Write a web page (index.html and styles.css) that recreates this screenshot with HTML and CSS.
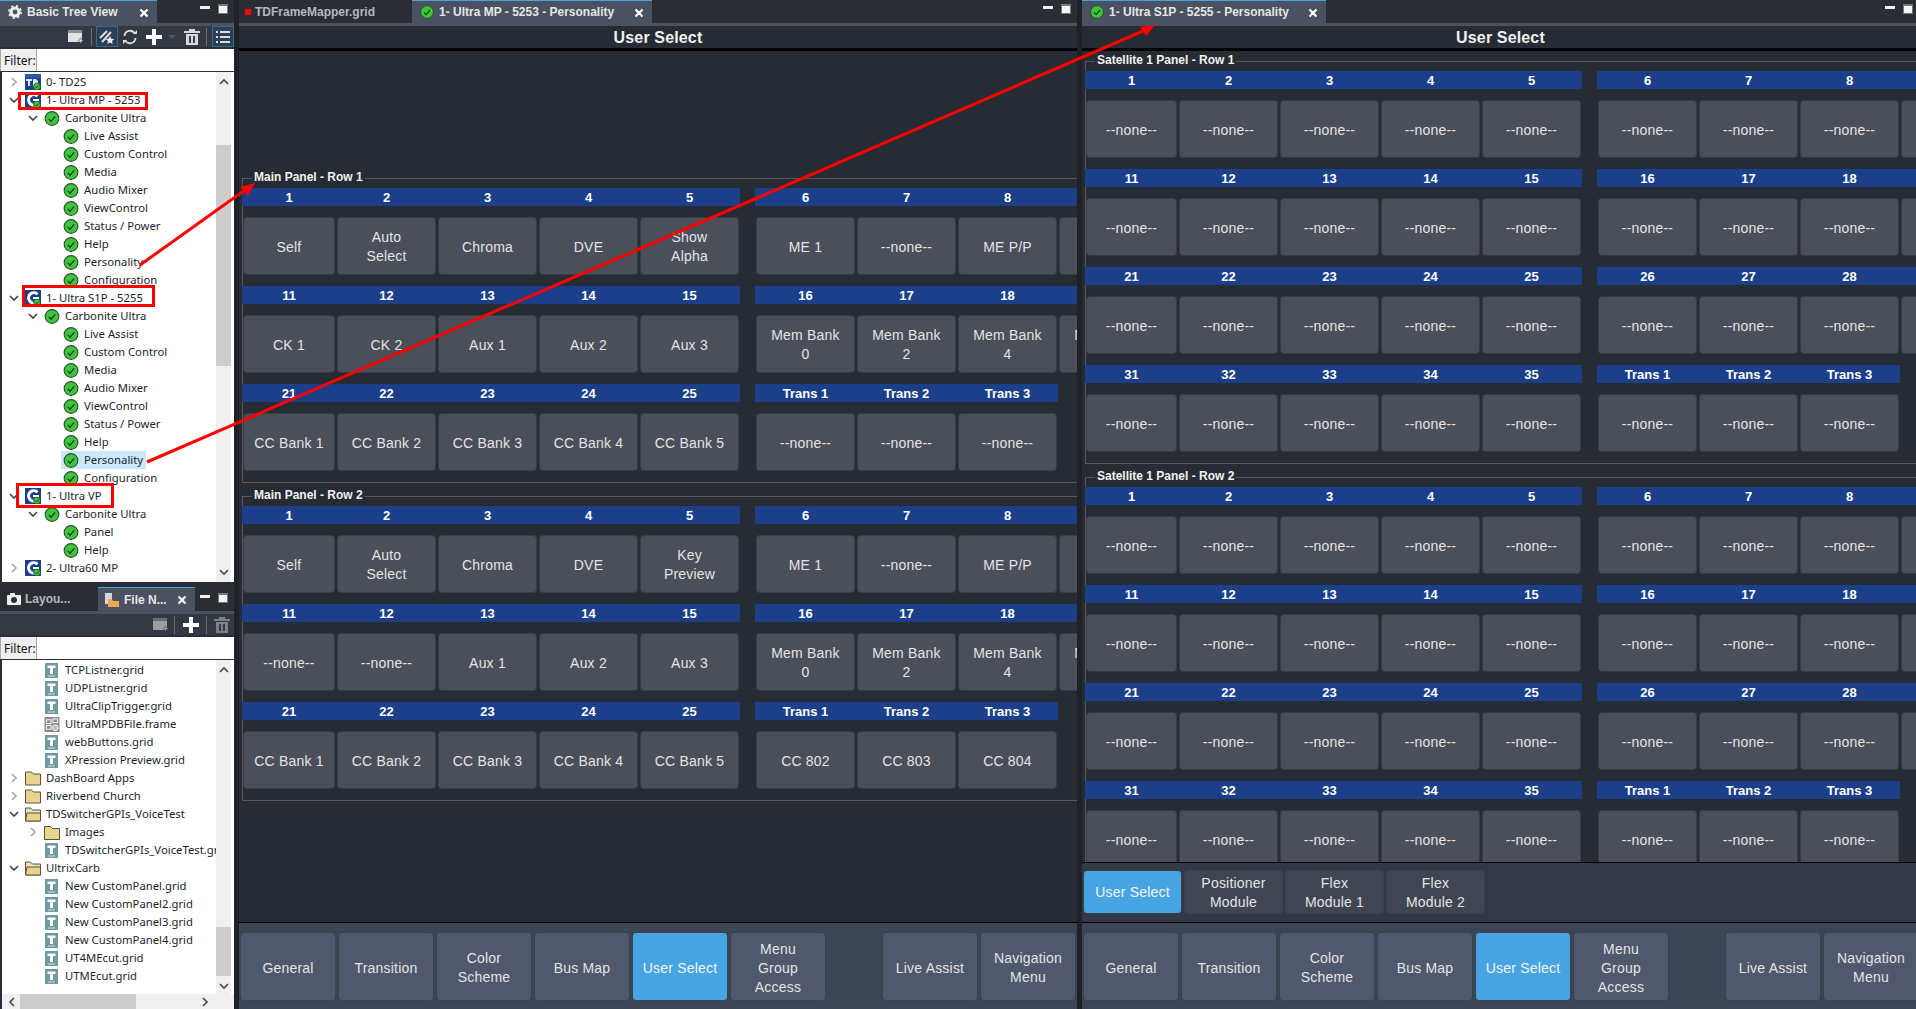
FILE: index.html
```html
<!DOCTYPE html>
<html lang="en">
<head>
<meta charset="utf-8">
<title>DashBoard</title>
<link rel="stylesheet" href="styles.css">
</head>
<body>
<svg class="defs" width="0" height="0" aria-hidden="true">
  <symbol id="ok" viewBox="0 0 14 14"><circle cx="7" cy="7" r="6.4" fill="#3cc63c" stroke="#2c4a30"/><path d="M4 7.4l2.1 2.2L10 5" fill="none" stroke="#1d3a20" stroke-width="1.2"/></symbol>
  <symbol id="logo" viewBox="0 0 16 16"><rect width="16" height="16" fill="#1c3f8a"/><path d="M12.5 4.2A5.2 5.2 0 1 0 11 12.6" fill="none" stroke="#fff" stroke-width="3"/><rect x="8" y="7" width="6" height="2" fill="#fff"/><circle cx="12" cy="12.5" r="3.4" fill="#3cc63c" stroke="#2c4a30" stroke-width=".7"/><path d="M10.4 12.6l1.2 1.2 2-2.2" fill="none" stroke="#1d3a20"/></symbol>
  <symbol id="tdlogo" viewBox="0 0 16 16"><rect width="16" height="16" fill="#1c3f8a"/><rect y="0" width="16" height="4" fill="#2a5aa8"/><path d="M1 5h6v2H5v5H3V7H1zM8 5h3l2 2v3l-2 2H8z" fill="#dfe6f2"/><circle cx="12" cy="12.5" r="3.4" fill="#3cc63c" stroke="#2c4a30" stroke-width=".7"/><path d="M10.4 12.6l1.2 1.2 2-2.2" fill="none" stroke="#1d3a20"/></symbol>
  <symbol id="file" viewBox="0 0 14 15"><rect width="13" height="15" fill="#6f9a9f"/><path d="M2.5 2.5h8V5H8v6H5V5H2.5z" fill="#fff"/><rect x="3" y="12.5" width="7" height="1" fill="#cfe0e2"/></symbol>
  <symbol id="frame" viewBox="0 0 16 16"><rect width="16" height="16" fill="#8b8b8b"/><rect x="2" y="3" width="5" height="4" fill="none" stroke="#fff"/><rect x="2" y="9" width="5" height="4" fill="none" stroke="#fff"/><rect x="9" y="2" width="5" height="4" fill="none" stroke="#fff"/><circle cx="11.5" cy="11.5" r="3" fill="#bbb" stroke="#fff"/></symbol>
  <symbol id="fold" viewBox="0 0 16 15"><path d="M.5 14.5V1.5h6l2 2h7v11z" fill="#e8d48f" stroke="#5a5240"/></symbol>
  <symbol id="fopen" viewBox="0 0 16 15"><path d="M.5 14.5V1.5h5l2 2h8v11z" fill="#f0e3b5" stroke="#5a5240"/><path d="M.5 14.5l1.5-8h13.5v8z" fill="#e8d48f" stroke="#5a5240"/></symbol>
  <symbol id="gt" viewBox="0 0 10 10"><path d="M3 1l4 4-4 4" fill="none" stroke="#a5a5a5" stroke-width="1.6"/></symbol>
  <symbol id="gtd" viewBox="0 0 10 10"><path d="M3 1l4 4-4 4" fill="none" stroke="#444" stroke-width="1.6"/></symbol>
  <symbol id="dn" viewBox="0 0 10 10"><path d="M1 3l4 4 4-4" fill="none" stroke="#444" stroke-width="1.6"/></symbol>
  <symbol id="x" viewBox="0 0 10 10"><path d="M1.5 1.5l7 7M8.5 1.5l-7 7" fill="none" stroke="#fff" stroke-width="2.2"/></symbol>
  <symbol id="plus" viewBox="0 0 16 16"><path d="M6 0h4v6h6v4h-6v6H6v-6H0V6h6z" fill="#fff"/></symbol>
  <symbol id="trash" viewBox="0 0 16 16"><path d="M0 2h16v2H0zM5 0h6v2H5zM2 5h12v11H2z" fill="#d8d8d8"/><path d="M6 7v7M10 7v7" stroke="#3a3f48" stroke-width="2"/></symbol>
  <symbol id="newwin" viewBox="0 0 16 16"><path d="M1 1h14v12H1z" fill="#e2e2e2"/><rect x="1" y="1" width="14" height="3" fill="#8a8f98"/><path d="M11 11h2V9h1v2h2v1h-2v2h-1v-2h-2z" fill="#fff" stroke="#333943" stroke-width=".4"/></symbol>
</svg>

<aside class="side">
  <section class="dock top">
    <div class="strip">
      <div class="tab on wide"><svg class="i14" viewBox="0 0 14 14"><circle cx="7" cy="7" r="4" fill="none" stroke="#eee" stroke-width="3.2"/><circle cx="7" cy="7" r="6.2" fill="none" stroke="#eee" stroke-width="1.6" stroke-dasharray="2.2 2.7"/></svg><span class="tabtxt">Basic Tree View</span><svg class="xic"><use href="#x"/></svg></div>
      <div class="winctl"><i class="min"></i><i class="max"></i></div>
    </div>
    <div class="tools">
      <svg class="ti g1"><use href="#newwin"/></svg>
      <i class="sep s1"></i>
      <div class="sel"><svg class="ti" viewBox="0 0 16 16"><path d="M1 9L8 2M3 13L12 3" stroke="#ddd" stroke-width="2" fill="none"/><path d="M11 7l1.300 2.800 3 .3-2.300 2 .7 3-2.700-1.600-2.700 1.600.7-3-2.300-2 3-.3z" fill="#eee"/></svg></div>
      <svg class="ti g2" viewBox="0 0 16 16"><path d="M2.500 7A5.500 5.500 0 0 1 13 5M13.500 9A5.500 5.500 0 0 1 3 11" fill="none" stroke="#ddd" stroke-width="1.800"/><path d="M11 5h4V1zM5 11H1v4z" fill="#ddd"/></svg>
      <svg class="ti g3"><use href="#plus"/></svg>
      <i class="caret"></i>
      <svg class="ti g4"><use href="#trash"/></svg>
      <i class="sep s2"></i>
      <div class="sel last"><svg class="ti" viewBox="0 0 16 16"><path d="M1 2h2v2H1zM5 2h10v2H5zM1 7h2v2H1zM5 7h10v2H5zM1 12h2v2H1zM5 12h10v2H5z" fill="#ddd"/></svg></div>
    </div>
    <div class="filter"><label class="flabel">Filter:</label><div class="finput"></div></div>
    <div class="treewrap">
      <div class="tree">
        <div class="r l0"><svg class="ch"><use href="#gt"/></svg><svg class="ic"><use href="#tdlogo"/></svg><span>0- TD2S</span></div>
        <div class="r l0"><svg class="ch"><use href="#dn"/></svg><svg class="ic"><use href="#logo"/></svg><span>1- Ultra MP - 5253</span></div>
        <div class="r l1"><svg class="ch"><use href="#dn"/></svg><svg class="ic"><use href="#ok"/></svg><span>Carbonite Ultra</span></div>
        <div class="r l2"><svg class="ic"><use href="#ok"/></svg><span>Live Assist</span></div>
        <div class="r l2"><svg class="ic"><use href="#ok"/></svg><span>Custom Control</span></div>
        <div class="r l2"><svg class="ic"><use href="#ok"/></svg><span>Media</span></div>
        <div class="r l2"><svg class="ic"><use href="#ok"/></svg><span>Audio Mixer</span></div>
        <div class="r l2"><svg class="ic"><use href="#ok"/></svg><span>ViewControl</span></div>
        <div class="r l2"><svg class="ic"><use href="#ok"/></svg><span>Status / Power</span></div>
        <div class="r l2"><svg class="ic"><use href="#ok"/></svg><span>Help</span></div>
        <div class="r l2"><svg class="ic"><use href="#ok"/></svg><span>Personality</span></div>
        <div class="r l2"><svg class="ic"><use href="#ok"/></svg><span>Configuration</span></div>
        <div class="r l0"><svg class="ch"><use href="#dn"/></svg><svg class="ic"><use href="#logo"/></svg><span>1- Ultra S1P - 5255</span></div>
        <div class="r l1"><svg class="ch"><use href="#dn"/></svg><svg class="ic"><use href="#ok"/></svg><span>Carbonite Ultra</span></div>
        <div class="r l2"><svg class="ic"><use href="#ok"/></svg><span>Live Assist</span></div>
        <div class="r l2"><svg class="ic"><use href="#ok"/></svg><span>Custom Control</span></div>
        <div class="r l2"><svg class="ic"><use href="#ok"/></svg><span>Media</span></div>
        <div class="r l2"><svg class="ic"><use href="#ok"/></svg><span>Audio Mixer</span></div>
        <div class="r l2"><svg class="ic"><use href="#ok"/></svg><span>ViewControl</span></div>
        <div class="r l2"><svg class="ic"><use href="#ok"/></svg><span>Status / Power</span></div>
        <div class="r l2"><svg class="ic"><use href="#ok"/></svg><span>Help</span></div>
        <div class="r l2 hl"><svg class="ic"><use href="#ok"/></svg><span>Personality</span></div>
        <div class="r l2"><svg class="ic"><use href="#ok"/></svg><span>Configuration</span></div>
        <div class="r l0"><svg class="ch"><use href="#dn"/></svg><svg class="ic"><use href="#logo"/></svg><span>1- Ultra VP</span></div>
        <div class="r l1"><svg class="ch"><use href="#dn"/></svg><svg class="ic"><use href="#ok"/></svg><span>Carbonite Ultra</span></div>
        <div class="r l2"><svg class="ic"><use href="#ok"/></svg><span>Panel</span></div>
        <div class="r l2"><svg class="ic"><use href="#ok"/></svg><span>Help</span></div>
        <div class="r l0"><svg class="ch"><use href="#gt"/></svg><svg class="ic"><use href="#logo"/></svg><span>2- Ultra60 MP</span></div>
      </div>
      <div class="vbar"><svg class="arr"><use href="#dn" class="up"/></svg><div class="thumb t1"></div><svg class="arr"><use href="#dn"/></svg></div>
    </div>
  </section>

  <section class="dock bottom">
    <div class="strip s2tall">
      <div class="tab off"><svg class="i14" viewBox="0 0 14 14"><rect x="0" y="3" width="14" height="10" rx="1" fill="#eee"/><rect x="3" y="1" width="5" height="3" fill="#eee"/><circle cx="7" cy="8" r="3" fill="#2b2f35"/></svg><span class="tabtxt dim">Layou...</span></div>
      <div class="tab on small"><svg class="i14" viewBox="0 0 14 14"><rect x="0" y="0" width="7" height="11" fill="#cfd6e0"/><path d="M3 6h4l1 2h6v6H3z" fill="#f0a84a"/></svg><span class="tabtxt">File N...</span><svg class="xic"><use href="#x"/></svg></div>
      <div class="winctl"><i class="min"></i><i class="max"></i></div>
    </div>
    <div class="tools lowbar">
      <svg class="ti g5"><use href="#newwin"/></svg>
      <i class="sep s3"></i>
      <svg class="ti g6"><use href="#plus"/></svg>
      <i class="sep s4"></i>
      <svg class="ti g7"><use href="#trash"/></svg>
    </div>
    <div class="filter"><label class="flabel">Filter:</label><div class="finput"></div></div>
    <div class="treewrap">
      <div class="tree">
        <div class="r l1"><svg class="ch none"></svg><svg class="ic"><use href="#file"/></svg><span>TCPListner.grid</span></div>
        <div class="r l1"><svg class="ch none"></svg><svg class="ic"><use href="#file"/></svg><span>UDPListner.grid</span></div>
        <div class="r l1"><svg class="ch none"></svg><svg class="ic"><use href="#file"/></svg><span>UltraClipTrigger.grid</span></div>
        <div class="r l1"><svg class="ch none"></svg><svg class="ic"><use href="#frame"/></svg><span>UltraMPDBFile.frame</span></div>
        <div class="r l1"><svg class="ch none"></svg><svg class="ic"><use href="#file"/></svg><span>webButtons.grid</span></div>
        <div class="r l1"><svg class="ch none"></svg><svg class="ic"><use href="#file"/></svg><span>XPression Preview.grid</span></div>
        <div class="r l0"><svg class="ch"><use href="#gt"/></svg><svg class="ic"><use href="#fold"/></svg><span>DashBoard Apps</span></div>
        <div class="r l0"><svg class="ch"><use href="#gt"/></svg><svg class="ic"><use href="#fold"/></svg><span>Riverbend Church</span></div>
        <div class="r l0"><svg class="ch"><use href="#dn"/></svg><svg class="ic"><use href="#fopen"/></svg><span>TDSwitcherGPIs_VoiceTest</span></div>
        <div class="r l1"><svg class="ch"><use href="#gt"/></svg><svg class="ic"><use href="#fold"/></svg><span>Images</span></div>
        <div class="r l1"><svg class="ch none"></svg><svg class="ic"><use href="#file"/></svg><span>TDSwitcherGPIs_VoiceTest.grid</span></div>
        <div class="r l0"><svg class="ch"><use href="#dn"/></svg><svg class="ic"><use href="#fopen"/></svg><span>UltrixCarb</span></div>
        <div class="r l1"><svg class="ch none"></svg><svg class="ic"><use href="#file"/></svg><span>New CustomPanel.grid</span></div>
        <div class="r l1"><svg class="ch none"></svg><svg class="ic"><use href="#file"/></svg><span>New CustomPanel2.grid</span></div>
        <div class="r l1"><svg class="ch none"></svg><svg class="ic"><use href="#file"/></svg><span>New CustomPanel3.grid</span></div>
        <div class="r l1"><svg class="ch none"></svg><svg class="ic"><use href="#file"/></svg><span>New CustomPanel4.grid</span></div>
        <div class="r l1"><svg class="ch none"></svg><svg class="ic"><use href="#file"/></svg><span>UT4MEcut.grid</span></div>
        <div class="r l1"><svg class="ch none"></svg><svg class="ic"><use href="#file"/></svg><span>UTMEcut.grid</span></div>
      </div>
      <div class="vbar"><svg class="arr"><use href="#dn" class="up"/></svg><div class="thumb t2"></div><svg class="arr"><use href="#dn"/></svg></div>
    </div>
    <div class="hbar"><svg class="arr"><use href="#gtd"/></svg><div class="hthumb"></div><svg class="arr"><use href="#gtd"/></svg></div>
  </section>
</aside>

<main class="pane first">
  <div class="strip">
    <div class="tab off mapper"><i class="redsq"></i><span class="tabtxt dim">TDFrameMapper.grid</span></div>
    <div class="tab on doc mp"><svg class="i14"><use href="#ok"/></svg><span class="tabtxt">1- Ultra MP - 5253 - Personality</span><svg class="xic"><use href="#x"/></svg></div>
    <div class="winctl"><i class="min"></i><i class="max"></i></div>
  </div>
  <h1 class="title">User Select</h1>
  <div class="content lower">
    <div class="group">
      <div class="glabel">Main Panel - Row 1</div>
      <div class="row">
        <div class="sec a"><div class="hd"><span>1</span><span>2</span><span>3</span><span>4</span><span>5</span></div><div class="bt"><div class="btn">Self</div><div class="btn">Auto<br>Select</div><div class="btn">Chroma</div><div class="btn">DVE</div><div class="btn">Show<br>Alpha</div></div></div>
        <div class="sec"><div class="hd"><span>6</span><span>7</span><span>8</span><span></span></div><div class="bt"><div class="btn">ME 1</div><div class="btn">--none--</div><div class="btn">ME P/P</div><div class="btn"></div></div></div>
      </div>
      <div class="row">
        <div class="sec a"><div class="hd"><span>11</span><span>12</span><span>13</span><span>14</span><span>15</span></div><div class="bt"><div class="btn">CK 1</div><div class="btn">CK 2</div><div class="btn">Aux 1</div><div class="btn">Aux 2</div><div class="btn">Aux 3</div></div></div>
        <div class="sec"><div class="hd"><span>16</span><span>17</span><span>18</span><span></span></div><div class="bt"><div class="btn">Mem Bank<br>0</div><div class="btn">Mem Bank<br>2</div><div class="btn">Mem Bank<br>4</div><div class="btn">Mem Bank<br>6</div></div></div>
      </div>
      <div class="row">
        <div class="sec a"><div class="hd"><span>21</span><span>22</span><span>23</span><span>24</span><span>25</span></div><div class="bt"><div class="btn">CC Bank 1</div><div class="btn">CC Bank 2</div><div class="btn">CC Bank 3</div><div class="btn">CC Bank 4</div><div class="btn">CC Bank 5</div></div></div>
        <div class="sec"><div class="hd"><span>Trans 1</span><span>Trans 2</span><span>Trans 3</span></div><div class="bt"><div class="btn">--none--</div><div class="btn">--none--</div><div class="btn">--none--</div></div></div>
      </div>
    </div>
    <div class="group">
      <div class="glabel">Main Panel - Row 2</div>
      <div class="row">
        <div class="sec a"><div class="hd"><span>1</span><span>2</span><span>3</span><span>4</span><span>5</span></div><div class="bt"><div class="btn">Self</div><div class="btn">Auto<br>Select</div><div class="btn">Chroma</div><div class="btn">DVE</div><div class="btn">Key<br>Preview</div></div></div>
        <div class="sec"><div class="hd"><span>6</span><span>7</span><span>8</span><span></span></div><div class="bt"><div class="btn">ME 1</div><div class="btn">--none--</div><div class="btn">ME P/P</div><div class="btn"></div></div></div>
      </div>
      <div class="row">
        <div class="sec a"><div class="hd"><span>11</span><span>12</span><span>13</span><span>14</span><span>15</span></div><div class="bt"><div class="btn">--none--</div><div class="btn">--none--</div><div class="btn">Aux 1</div><div class="btn">Aux 2</div><div class="btn">Aux 3</div></div></div>
        <div class="sec"><div class="hd"><span>16</span><span>17</span><span>18</span><span></span></div><div class="bt"><div class="btn">Mem Bank<br>0</div><div class="btn">Mem Bank<br>2</div><div class="btn">Mem Bank<br>4</div><div class="btn">Mem Bank<br>6</div></div></div>
      </div>
      <div class="row">
        <div class="sec a"><div class="hd"><span>21</span><span>22</span><span>23</span><span>24</span><span>25</span></div><div class="bt"><div class="btn">CC Bank 1</div><div class="btn">CC Bank 2</div><div class="btn">CC Bank 3</div><div class="btn">CC Bank 4</div><div class="btn">CC Bank 5</div></div></div>
        <div class="sec"><div class="hd"><span>Trans 1</span><span>Trans 2</span><span>Trans 3</span></div><div class="bt"><div class="btn">CC 802</div><div class="btn">CC 803</div><div class="btn">CC 804</div></div></div>
      </div>
    </div>
  </div>
  <nav class="nav">
    <div class="n">General</div><div class="n">Transition</div><div class="n">Color<br>Scheme</div><div class="n">Bus Map</div><div class="n act">User Select</div><div class="n">Menu<br>Group<br>Access</div>
    <div class="n far">Live Assist</div><div class="n">Navigation<br>Menu</div>
  </nav>
</main>

<main class="pane second">
  <div class="strip">
    <div class="tab on doc s1p"><svg class="i14"><use href="#ok"/></svg><span class="tabtxt">1- Ultra S1P - 5255 - Personality</span><svg class="xic"><use href="#x"/></svg></div>
    <div class="winctl"><i class="min"></i><i class="max"></i></div>
  </div>
  <h1 class="title">User Select</h1>
  <div class="content">
    <div class="group">
      <div class="glabel">Satellite 1 Panel - Row 1</div>
      <div class="row">
        <div class="sec a"><div class="hd"><span>1</span><span>2</span><span>3</span><span>4</span><span>5</span></div><div class="bt"><div class="btn">--none--</div><div class="btn">--none--</div><div class="btn">--none--</div><div class="btn">--none--</div><div class="btn">--none--</div></div></div>
        <div class="sec"><div class="hd"><span>6</span><span>7</span><span>8</span><span></span></div><div class="bt"><div class="btn">--none--</div><div class="btn">--none--</div><div class="btn">--none--</div><div class="btn"></div></div></div>
      </div>
      <div class="row">
        <div class="sec a"><div class="hd"><span>11</span><span>12</span><span>13</span><span>14</span><span>15</span></div><div class="bt"><div class="btn">--none--</div><div class="btn">--none--</div><div class="btn">--none--</div><div class="btn">--none--</div><div class="btn">--none--</div></div></div>
        <div class="sec"><div class="hd"><span>16</span><span>17</span><span>18</span><span></span></div><div class="bt"><div class="btn">--none--</div><div class="btn">--none--</div><div class="btn">--none--</div><div class="btn"></div></div></div>
      </div>
      <div class="row">
        <div class="sec a"><div class="hd"><span>21</span><span>22</span><span>23</span><span>24</span><span>25</span></div><div class="bt"><div class="btn">--none--</div><div class="btn">--none--</div><div class="btn">--none--</div><div class="btn">--none--</div><div class="btn">--none--</div></div></div>
        <div class="sec"><div class="hd"><span>26</span><span>27</span><span>28</span><span></span></div><div class="bt"><div class="btn">--none--</div><div class="btn">--none--</div><div class="btn">--none--</div><div class="btn"></div></div></div>
      </div>
      <div class="row">
        <div class="sec a"><div class="hd"><span>31</span><span>32</span><span>33</span><span>34</span><span>35</span></div><div class="bt"><div class="btn">--none--</div><div class="btn">--none--</div><div class="btn">--none--</div><div class="btn">--none--</div><div class="btn">--none--</div></div></div>
        <div class="sec"><div class="hd"><span>Trans 1</span><span>Trans 2</span><span>Trans 3</span></div><div class="bt"><div class="btn">--none--</div><div class="btn">--none--</div><div class="btn">--none--</div></div></div>
      </div>
    </div>
    <div class="group">
      <div class="glabel">Satellite 1 Panel - Row 2</div>
      <div class="row">
        <div class="sec a"><div class="hd"><span>1</span><span>2</span><span>3</span><span>4</span><span>5</span></div><div class="bt"><div class="btn">--none--</div><div class="btn">--none--</div><div class="btn">--none--</div><div class="btn">--none--</div><div class="btn">--none--</div></div></div>
        <div class="sec"><div class="hd"><span>6</span><span>7</span><span>8</span><span></span></div><div class="bt"><div class="btn">--none--</div><div class="btn">--none--</div><div class="btn">--none--</div><div class="btn"></div></div></div>
      </div>
      <div class="row">
        <div class="sec a"><div class="hd"><span>11</span><span>12</span><span>13</span><span>14</span><span>15</span></div><div class="bt"><div class="btn">--none--</div><div class="btn">--none--</div><div class="btn">--none--</div><div class="btn">--none--</div><div class="btn">--none--</div></div></div>
        <div class="sec"><div class="hd"><span>16</span><span>17</span><span>18</span><span></span></div><div class="bt"><div class="btn">--none--</div><div class="btn">--none--</div><div class="btn">--none--</div><div class="btn"></div></div></div>
      </div>
      <div class="row">
        <div class="sec a"><div class="hd"><span>21</span><span>22</span><span>23</span><span>24</span><span>25</span></div><div class="bt"><div class="btn">--none--</div><div class="btn">--none--</div><div class="btn">--none--</div><div class="btn">--none--</div><div class="btn">--none--</div></div></div>
        <div class="sec"><div class="hd"><span>26</span><span>27</span><span>28</span><span></span></div><div class="bt"><div class="btn">--none--</div><div class="btn">--none--</div><div class="btn">--none--</div><div class="btn"></div></div></div>
      </div>
      <div class="row">
        <div class="sec a"><div class="hd"><span>31</span><span>32</span><span>33</span><span>34</span><span>35</span></div><div class="bt"><div class="btn">--none--</div><div class="btn">--none--</div><div class="btn">--none--</div><div class="btn">--none--</div><div class="btn">--none--</div></div></div>
        <div class="sec"><div class="hd"><span>Trans 1</span><span>Trans 2</span><span>Trans 3</span></div><div class="bt"><div class="btn">--none--</div><div class="btn">--none--</div><div class="btn">--none--</div></div></div>
      </div>
    </div>
  </div>
  <div class="subnav">
    <div class="m act">User Select</div><div class="m">Positioner<br>Module</div><div class="m">Flex<br>Module 1</div><div class="m">Flex<br>Module 2</div>
  </div>
  <nav class="nav">
    <div class="n">General</div><div class="n">Transition</div><div class="n">Color<br>Scheme</div><div class="n">Bus Map</div><div class="n act">User Select</div><div class="n">Menu<br>Group<br>Access</div>
    <div class="n far">Live Assist</div><div class="n">Navigation<br>Menu</div>
  </nav>
</main>

<svg class="notes" viewBox="0 0 1916 1009" aria-hidden="true">
  <rect x="19.500" y="93.500" width="127" height="15" class="box"/>
  <rect x="23.500" y="286.500" width="130" height="19" class="box"/>
  <rect x="17.500" y="484.500" width="95" height="22" class="box"/>
  <line x1="140" y1="265" x2="245" y2="190" class="ln"/>
  <polygon points="255,183 240,187 248,196" class="hd-arrow"/>
  <line x1="147" y1="462" x2="1143" y2="31" class="ln"/>
  <polygon points="1155,25 1140,27 1146,36" class="hd-arrow"/>
</svg>
</body>
</html>
```
FILE: styles.css
```css
* { box-sizing: border-box; }
html, body { margin: 0; height: 100%; }
body {
  position: relative;
  display: flex;
  width: 1916px;
  height: 1009px;
  overflow: hidden;
  background: #1e2125;
  font-family: "Liberation Sans", Arial, sans-serif;
}
.defs { position: absolute; }

/* ---------- sidebar ---------- */
.side { width: 234px; flex: none; display: flex; flex-direction: column; margin-right: 5px; background: #2b2f35; }
.dock { display: flex; flex-direction: column; }
.dock.top { height: 582px; }
.dock.bottom { height: 427px; }

.strip { display: flex; height: 26px; flex: none; background: #2a2e34; border-bottom: 3px solid #4a5160; position: relative; }
.s2tall { height: 32px; padding-top: 5px; }
.tab { display: flex; align-items: center; height: 23px; flex: none; position: relative; }
.s2tall .tab { height: 24px; }
.tab.on { background: #4a5160; border-top: 1px solid #47a4e2; }
.tab.wide { width: 157px; padding-left: 8px; }
.tab.off { padding-left: 6px; }
.dock .tab.off { width: 98px; padding-left: 7px; }
.tab.small { width: 97px; padding-left: 7px; }
.i14 { width: 14px; height: 14px; flex: none; display: block; }
.tabtxt { font-size: 12px; font-weight: 700; color: #e6e6e6; margin-left: 5px; white-space: nowrap; }
.tabtxt.dim { color: #b4b8be; margin-left: 4px; }
.xic { width: 10px; height: 10px; position: absolute; right: 8px; top: 7px; }
.winctl { position: absolute; right: 6px; top: 4px; display: flex; gap: 8px; align-items: flex-start; }
.second .winctl { right: 3px; }
.s2tall .winctl { top: 11px; }
.min { width: 10px; height: 3px; background: #f0f0f0; display: block; margin-top: 2px; }
.max { width: 10px; height: 10px; background: #f5f5f5; border: 1px solid #777; border-top-width: 2px; display: block; }

.tools { height: 21px; flex: none; background: #333943; display: flex; align-items: center; }
.ti { width: 16px; height: 16px; display: block; flex: none; }
.sep { width: 1px; height: 18px; background: #6a6f78; flex: none; display: block; }
.sel { width: 22px; height: 21px; border: 1px solid #2c6da0; background: #2c3f52; display: flex; align-items: center; justify-content: center; flex: none; }
.g1 { margin-left: 67px; }
.s1 { margin-left: 8px; margin-right: 4px; }
.g2 { margin-left: 4px; }
.g3 { margin-left: 8px; }
.caret { width: 0; height: 0; border: 4px solid transparent; border-top-color: #555b66; border-bottom: 0; margin-left: 6px; display: block; }
.g4 { margin-left: 8px; }
.s2 { margin-left: 6px; margin-right: 5px; }
.sel.last { margin: 0; }
.g5 { margin-left: 152px; opacity: .6; }
.s3 { margin-left: 6px; }
.g6 { margin-left: 8px; }
.s4 { margin-left: 7px; }
.g7 { margin-left: 7px; opacity: .45; }

.filter { display: flex; height: 22px; flex: none; margin: 2px 0 1px; padding-left: 1px; background: #a8a8a8; gap: 1px; }
.flabel { width: 35px; background: #f0f0f0; color: #111; font: 12px/24px "Noto Sans", sans-serif; padding-left: 3px; }
.finput { flex: 1; background: #fff; }

.treewrap { flex: 1; min-height: 0; background: #fff; display: flex; margin-left: 2px; overflow: hidden; }
.tree { width: 214px; flex: none; padding-top: 1px; overflow: hidden; }
.r { display: flex; align-items: center; height: 18px; white-space: nowrap; font: 11.300px/18px "Noto Sans", sans-serif; color: #1b1f2e; }
.r span { margin-left: 5px; }
.l0 { padding-left: 7px; }
.l1 { padding-left: 26px; }
.l2 { padding-left: 61px; }
.ch { width: 10px; height: 10px; flex: none; margin-right: 6px; }
.ic { width: 16px; height: 16px; flex: none; }
.l1 .ic, .l2 .ic { width: 16px; height: 15px; }
.hl { margin-left: 59px; padding-left: 2px; width: 85px; background: #cce8ff; }

.vbar { width: 15px; background: #f0f0f0; display: flex; flex-direction: column; align-items: center; }
.vbar .arr { margin: 5px 0; }
.arr { width: 10px; height: 10px; flex: none; }
.up { transform: rotate(180deg); transform-origin: 5px 5px; }
.thumb { background: #cdcdcd; width: 15px; flex: none; }
.t1 { height: 221px; margin-top: 53px; margin-bottom: 196px; }
.t2 { height: 49px; margin-top: 247px; margin-bottom: 0; }
.hbar { height: 15px; flex: none; background: #f0f0f0; display: flex; align-items: center; margin-left: 2px; }
.hbar .arr:first-child { transform: rotate(180deg); margin-left: 5px; margin-right: 3px; }
.hthumb { width: 116px; height: 15px; background: #cdcdcd; }
.hbar .arr:last-child { margin-left: 64px; }

/* ---------- panes ---------- */
.pane { display: flex; flex-direction: column; flex: none; height: 1009px; overflow: hidden; background: #272b33; }
.pane.first { width: 838px; margin-right: 5px; }
.pane.second { width: 834px; }
.mapper { width: 173px; }
.redsq { width: 6px; height: 6px; background: #f00; display: block; flex: none; }
.doc { width: 240px; padding-left: 8px; }
.s1p { width: 244px; }
.title { margin: 0; height: 25px; flex: none; border-bottom: 3px solid #000; font-size: 16px; line-height: 23px; font-weight: 700; color: #f2f2f2; text-align: center; letter-spacing: .15px; }
.second .title { padding-left: 3px; }
.content { flex: 1; min-height: 0; padding: 10px 0 0 3px; overflow: hidden; }
.content.lower { padding-top: 127px; }

.group { width: 1200px; border: 1px solid #55585e; border-right: 0; margin-bottom: 13px; }
.glabel { width: fit-content; height: 17px; margin: -10px 0 2px 9px; padding: 0 2px; background: #272b33; color: #f2f2f2; font-size: 12px; font-weight: 700; line-height: 17px; }
.row { display: flex; gap: 15px; height: 98px; margin-left: -1px; }
.sec { flex: none; }
.hd { display: flex; gap: 4px; height: 18px; padding: 0 2px; background: #1c3f8a; width: fit-content; }
.hd span { width: 97px; text-align: center; font-size: 13px; font-weight: 700; line-height: 19px; color: #fff; }
.a .hd span:first-child, .a .btn:first-child { width: 90px; }
.second .a .hd span:first-child, .second .a .btn:first-child { width: 89px; }
.bt { display: flex; gap: 4px; padding: 12px 0 0 2px; }
.btn, .n, .m {
  display: flex; align-items: center; justify-content: center; text-align: center; flex: none;
  font-size: 14px; line-height: 19px; letter-spacing: .2px; color: #e4e4e4; border-radius: 3px;
}
.btn { width: 97px; height: 56px; padding-top: 2px; background: #4a4f5a; box-shadow: 0 0 0 1px #383c44; }

.subnav { height: 60px; flex: none; background: #333844; border-top: 1px solid #000; display: flex; gap: 4px; padding: 8px 0 0 2px; }
.m { width: 97px; height: 42px; padding-top: 1px; background: #404552; box-shadow: 0 0 0 1px #3a3f4b; }
.nav { height: 87px; flex: none; background: #3d4554; border-top: 1px solid #000; display: flex; gap: 4px; padding: 10px 0 0 2px; }
.n { width: 94px; height: 67px; padding-top: 3px; background: #4f586c; box-shadow: 0 0 0 1px #394151; }
.act { background: #47a4e2; color: #f4f4f4; }
.far { margin-left: 54px; }

/* ---------- annotations drawn on top of the screenshot ---------- */
.notes { position: absolute; left: 0; top: 0; width: 1916px; height: 1009px; pointer-events: none; }
.box { fill: none; stroke: #f00; stroke-width: 3; }
.ln { stroke: #f00; stroke-width: 3; }
.hd-arrow { fill: #f00; }
```
